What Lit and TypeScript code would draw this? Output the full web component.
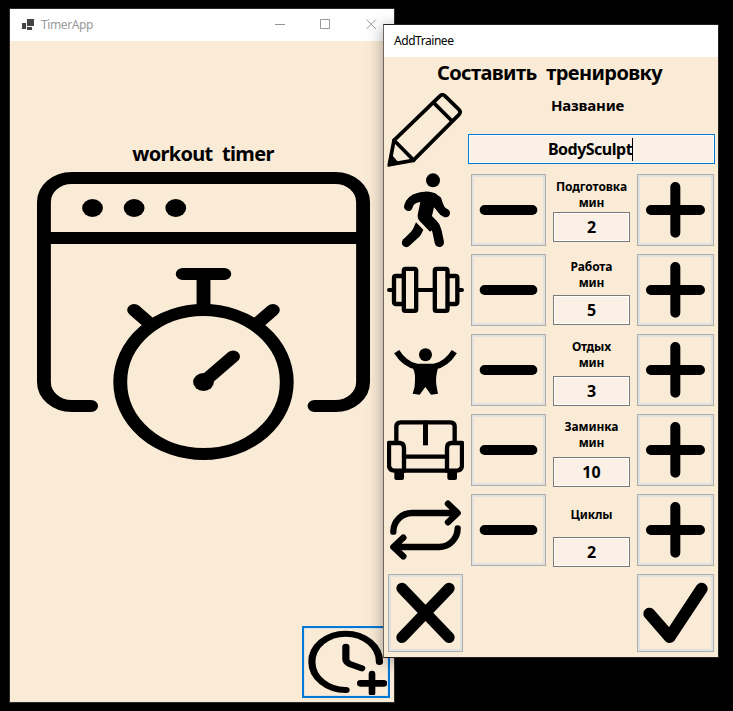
import { LitElement, html, css, svg } from "lit";
import { customElement, property } from "lit/decorators.js";

const walk = svg`<g class="line">
  <circle class="solid" cx="159" cy="46" r="21"/>
  <path class="solid" d="M100 89Q122 78 148 80Q170 82 180 98Q188 112 192 124L180 142Q166 133 162 127L155 157L178 178L150 200L119 168Q110 158 114 145L121 111Q110 112 102 118Z"/>
  <path stroke-width="26" d="M85 125Q91 102 116 97"/>
  <path stroke-width="26" d="M172 105Q178 136 197 144"/>
  <path stroke-width="28" d="M136 153L160 177Q168 185 171 199L178 232"/>
  <path class="solid" d="M108 172L130 194Q125 207 118 215L90 241L69 224L93 200Q100 193 104 181Z"/>
  <circle class="solid" cx="79" cy="233" r="13.5"/></g>`;

const dumbbell = svg`<g class="line" stroke-width="13">
  <path stroke-width="12" d="M27 375H38M114 375H160M236 375H246"/>
  <rect x="71.500" y="311.500" width="37" height="126" rx="5"/>
  <rect x="164.500" y="311.500" width="38" height="126" rx="5"/>
  <path d="M71 333H48Q42 333 42 339V411Q42 417 48 417H71M203 333H226Q232 333 232 339V411Q232 417 226 417H203"/></g>`;

const rest = svg`<g class="line">
  <circle class="solid" cx="136.500" cy="89" r="19.500"/>
  <path class="flat" stroke-width="18" d="M50 80Q75 119 110 125M223 80Q198 119 163 125"/>
  <path class="solid" d="M96 116H177L173 133Q166 158 169 180L174 206L153 209L136 186L119 209L98 206Q106 185 105 165Q106 145 100 133Z"/></g>`;

const sofa = svg`<g class="line" stroke-width="13">
  <path class="flat" d="M49 350V305Q49 292 62 292H211Q224 292 224 305V350"/>
  <path class="flat" stroke-width="15" d="M136.500 287V361"/>
  <path d="M27 354H60Q72 355 72 370V437H43Q27 436 27 420ZM246 354H213Q201 355 201 370V437H230Q246 436 246 420Z"/>
  <path d="M72 395H201M72 437H201"/>
  <path class="solid" d="M43 441H72V459Q72 465 66 465H49Q43 465 43 459ZM202 441H231V459Q231 465 225 465H208Q202 465 202 459Z"/></g>`;

const cycles = svg`<g class="line" stroke-width="19">
  <path d="M40 140A56 56 0 0 1 96 84H230M204 56L233 84L204 112"/>
  <path d="M233 130A56 56 0 0 1 177 186H44M70 158L40 186L70 214"/></g>`;

const pencil = svg`<g class="line" stroke-width="11">
  <path d="M28 434L42 361L181 227Q187 221 194 227L237 269Q244 276 237 284L100 421Z"/>
  <path d="M42 361L101 421M160 247L216 303"/>
  <path class="solid" d="M22 440L31 400L60 432Z"/></g>`;

const minus = svg`<path class="line" stroke-width="30" d="M314 135H457"/>`;
const plus = svg`<path class="line" stroke-width="30" d="M318 135H465M391 66V203"/>`;
const cross = svg`<path class="line" stroke-width="34" d="M66 310L207 457M207 310L66 457"/>`;
const check = svg`<path class="line" stroke-width="36" d="M313 386L374 456L470 311"/>`;

const iconStyles = css`
  svg { display: block; }
  .line { fill: none; stroke: #000; stroke-linecap: round; stroke-linejoin: round; }
  .solid { fill: #000; stroke: none; }
  .flat { stroke-linecap: butt; }
`;

@customElement("icon-button")
class IconButton extends LitElement {
  @property({ attribute: false }) icon: unknown;
  @property() box = "0 0 24 24";
  static styles = [iconStyles, css`
    :host { display: block; }
    button { display: block; width: 100%; height: 100%; padding: 0; box-sizing: border-box;
      border: 1px solid #adadad; background: #faebd7; box-shadow: inset 0 0 0 2px #e1e1e1; }
    svg { width: calc(100% - 4px); height: calc(100% - 4px); margin: 2px; }
  `];
  render() {
    return html`<button><svg viewBox=${this.box} preserveAspectRatio="none">${this.icon}</svg></button>`;
  }
}

interface Step { label: string; unit: string; value: number; gap: number; icon: unknown; box: string; }

const steps: Step[] = [
  { label: "Подготовка", unit: "мин", value: 2, gap: 38, icon: walk, box: "21 15 231 240" },
  { label: "Работа", unit: "мин", value: 5, gap: 41, icon: dumbbell, box: "21 255 231 240" },
  { label: "Отдых", unit: "мин", value: 3, gap: 42, icon: rest, box: "21 15 231 240" },
  { label: "Заминка", unit: "мин", value: 10, gap: 43, icon: sofa, box: "21 255 231 240" },
  { label: "Циклы", unit: "", value: 2, gap: 43, icon: cycles, box: "21 15 231 240" },
];

@customElement("timer-window")
class TimerWindow extends LitElement {
  static styles = [iconStyles, css`
    :host { display: flex; flex-direction: column; box-sizing: border-box; border: 1px solid #2b2b2b; background: #faebd7; }
    header { display: flex; align-items: center; height: 32px; background: #fff; color: #999;
      font: 12px/32px "Noto Sans", sans-serif; }
    .logo { width: 12px; height: 11px; margin: 0 7px 2px 12px; }
    .name { flex: 1; letter-spacing: -0.4px; }
    .controls { width: 102px; height: 10px; margin: 0 17px 2px 0; fill: none; stroke: #999; }
    main { flex: 1; display: flex; flex-direction: column; align-items: center; }
    h1 { margin: 98px 0 1px 2px; font: 700 20px/30px "Comic Sans MS", "Noto Sans", sans-serif;
      letter-spacing: -0.7px; word-spacing: 5px; white-space: nowrap; }
    .watch { width: 333px; height: 288px; margin: 2px 0 0 3px; }
    .add { width: 88px; height: 72px; margin: auto 4px 4px auto; padding: 1px; box-sizing: border-box;
      border: 2px solid #0078d7; background: #faebd7; box-shadow: inset 0 0 0 1px #e1e1e1; }
    .add svg { width: 82px; height: 66px; }
  `];
  render() {
    return html`
      <header>
        <svg class="logo" viewBox="0 0 12 11" fill="#444"><path d="M0 4h4v6H0zM5 0h7v7H5zM5 8h5v3H5z"/></svg>
        <span class="name">TimerApp</span>
        <svg class="controls" viewBox="0 0 102 10"><path d="M0 5.500H10M45.500.500h9v9h-9zM91.500.500l9.500 9.500M101 .500l-9.500 9.500"/></svg>
      </header>
      <main>
        <h1>workout timer</h1>
        <svg class="watch" viewBox="0 0 24 24" preserveAspectRatio="none"><g class="line" stroke-width="1">
          <path d="M3.900 19.500H2.500a2 2 0 0 1-2-2V2.500a2 2 0 0 1 2-2h19a2 2 0 0 1 2 2v15a2 2 0 0 1-2 2H20M.500 5.500h23"/>
          <circle class="solid" cx="4" cy="3" r=".75"/><circle class="solid" cx="7" cy="3" r=".75"/><circle class="solid" cx="10" cy="3" r=".75"/>
          <circle cx="12" cy="17.500" r="6"/>
          <path d="M10.500 8.500h3M12 8.500v3M7 11.500l1.200 1.200M17 11.500l-1.200 1.200M12 17.500l2.130-2.130"/>
          <circle class="solid" cx="12" cy="17.500" r=".75"/></g></svg>
        <button class="add"><svg viewBox="45 87 246 198" preserveAspectRatio="none"><g class="line">
          <path stroke-width="18" transform="translate(167 186) scale(1.200 1)" d="M84.500 0A84.500 84.500 0 1 0 1 84M.500-46V-8Q.500 0 10 6L40 19"/>
          <path stroke-width="20" d="M246 222V278M211 250H282"/></g></svg></button>
      </main>`;
  }
}

@customElement("trainee-window")
class TraineeWindow extends LitElement {
  static styles = [iconStyles, css`
    :host { display: flex; flex-direction: column; box-sizing: border-box; background: #faebd7;
      border: 1px solid #222; border-left-color: #6d655e; box-shadow: 0 3px 15px rgba(0, 0, 0, 0.36);
      font-family: "Comic Sans MS", "Noto Sans", sans-serif; font-weight: 700; color: #000; }
    header { height: 32px; padding-left: 10px; background: #fff; font: 12px/32px "Noto Sans", sans-serif; letter-spacing: -0.45px; }
    h2 { margin: 0 0 0 -3px; height: 33px; font-size: 20px; line-height: 32px; letter-spacing: -0.6px; word-spacing: 5px;
      text-align: center; white-space: nowrap; }
    .top { display: grid; grid-template-columns: 77px 247px; column-gap: 4px; margin-left: 3px; height: 80px; }
    .icon { width: 77px; height: 80px; }
    .caption { height: 44px; padding-right: 8px; box-sizing: border-box; font-size: 15px; line-height: 30px;
      letter-spacing: -0.2px; text-align: center; }
    .field { box-sizing: border-box; height: 30px; border: 1px solid #7a7a7a; background: #faf0e6;
      box-shadow: inset 0 0 0 1px #fff; display: flex; align-items: center; justify-content: center;
      padding-bottom: 1px; font-size: 16px; }
    .focused { border-color: #0078d7; padding: 0 2px 0 0; letter-spacing: -0.5px; }
    .caret { width: 1px; height: 23px; background: #000; }
    .row { display: grid; grid-template-columns: 77px 75px 77px 77px; column-gap: 7px; height: 80px; margin-left: 3px; }
    .row icon-button { height: 72px; margin-top: 4px; }
    .step { padding-top: 4px; }
    .label { font-size: 12px; line-height: 16px; padding-top: 5px; box-sizing: border-box; text-align: center;
      letter-spacing: -0.1px; white-space: nowrap; }
    .single { padding-top: 13px; }
    .actions { display: flex; justify-content: space-between; padding: 4px 4px 4px 4px; }
    .actions icon-button { height: 78px; }
    .cancel { width: 75px; }
    .confirm { width: 77px; }
  `];
  render() {
    return html`
      <header>AddTrainee</header>
      <h2>Составить тренировку</h2>
      <div class="top">
        <svg class="icon" viewBox="21 210 231 240">${pencil}</svg>
        <div>
          <div class="caption">Название</div>
          <div class="field focused">BodySculpt<span class="caret"></span></div>
        </div>
      </div>
      ${steps.map(s => html`<div class="row">
        <svg class="icon" viewBox=${s.box}>${s.icon}</svg>
        <icon-button .icon=${minus} box="282 36 207 198"></icon-button>
        <div class="step">
          <div class="label ${s.unit ? "" : "single"}" style="height:${s.gap}px">${s.label}<br>${s.unit}</div>
          <div class="field">${s.value}</div>
        </div>
        <icon-button .icon=${plus} box="285 36 213 198"></icon-button>
      </div>`)}
      <div class="actions">
        <icon-button class="cancel" .icon=${cross} box="33 276 207 216"></icon-button>
        <icon-button class="confirm" .icon=${check} box="285 276 213 216"></icon-button>
      </div>`;
  }
}

@customElement("app-root")
class AppRoot extends LitElement {
  static styles = css`
    :host { display: block; position: relative; width: 733px; height: 711px; background: #000; overflow: hidden; }
    timer-window { position: absolute; left: 9px; top: 8px; width: 386px; height: 695px; }
    trainee-window { position: absolute; left: 383px; top: 24px; width: 336px; height: 634px; }
  `;
  render() {
    return html`<timer-window></timer-window><trainee-window></trainee-window>`;
  }
}
